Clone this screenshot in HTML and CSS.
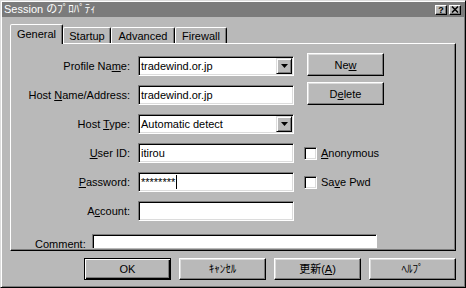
FILE: index.html
```html
<!DOCTYPE html>
<html>
<head>
<meta charset="utf-8">
<link rel="stylesheet" href="styles.css">
</head>
<body>
<div class="window">
  <div class="titlebar">
    <span class="title">Session のﾌﾟﾛﾊﾟﾃｨ</span>
    <div class="tb-btns">
      <span class="tbb tbb-help">?</span>
      <span class="tbb"><svg width="8" height="7" viewBox="0 0 8 7"><path d="M1 0.5 L7 6.5 M7 0.5 L1 6.5" stroke="#000" stroke-width="1.5" fill="none"/></svg></span>
    </div>
  </div>
  <div class="body">
    <div class="tabs">
      <div class="tab active tab-general">General</div>
      <div class="tab tab-startup">Startup</div>
      <div class="tab tab-advanced">Advanced</div>
      <div class="tab tab-firewall">Firewall</div>
    </div>
    <div class="panel">
      <div class="form">
        <label class="lbl">Profile Na<u>m</u>e:</label>
        <div class="field combo"><span class="val">tradewind.or.jp</span><span class="arrow"><svg width="7" height="4" viewBox="0 0 7 4"><path d="M0 0 H7 L3.5 4 Z" fill="#000"/></svg></span></div>
        <div class="right"><span class="btn side-btn">Ne<u>w</u></span></div>

        <label class="lbl">Host <u>N</u>ame/Address:</label>
        <div class="field"><span class="val">tradewind.or.jp</span></div>
        <div class="right"><span class="btn side-btn">D<u>e</u>lete</span></div>

        <label class="lbl">Host <u>T</u>ype:</label>
        <div class="field combo"><span class="val">Automatic detect</span><span class="arrow"><svg width="7" height="4" viewBox="0 0 7 4"><path d="M0 0 H7 L3.5 4 Z" fill="#000"/></svg></span></div>
        <div class="right"></div>

        <label class="lbl"><u>U</u>ser ID:</label>
        <div class="field"><span class="val">itirou</span></div>
        <div class="right check"><span class="box"></span><span><u>A</u>nonymous</span></div>

        <label class="lbl"><u>P</u>assword:</label>
        <div class="field"><span class="val pw">********</span><span class="caret"></span></div>
        <div class="right check"><span class="box"></span><span>Sa<u>v</u>e Pwd</span></div>

        <label class="lbl">A<u>c</u>count:</label>
        <div class="field"></div>
        <div class="right"></div>
      </div>
      <div class="comment-row">
        <label class="comment-lbl">Comment:</label>
        <div class="field comment-field"></div>
      </div>
    </div>
    <div class="buttons">
      <span class="btn big default">OK</span>
      <span class="btn big">ｷｬﾝｾﾙ</span>
      <span class="btn big">更新(<u>A</u>)</span>
      <span class="btn big">ﾍﾙﾌﾟ</span>
    </div>
  </div>
</div>
</body>
</html>
```
FILE: styles.css
```css
* { box-sizing: border-box; }
html, body { margin: 0; padding: 0; }
body {
  width: 466px;
  height: 288px;
  overflow: hidden;
  background: #b9b9b9;
  font-family: "Liberation Sans", "Noto Sans CJK JP", sans-serif;
  font-size: 11px;
  color: #000;
}
u { text-decoration: underline; text-underline-offset: 1px; }

.window {
  width: 466px;
  height: 288px;
  border: 1px solid;
  border-color: #dcdcdc #000 #000 #dcdcdc;
  box-shadow: inset 1px 1px #fff, inset -1px -1px #7b7b7b;
  padding: 1px;
  display: flex;
  flex-direction: column;
}

.titlebar {
  height: 15px;
  background: #7b7b7b;
  color: #fff;
  display: flex;
  align-items: center;
  padding: 0 3px 0 2px;
}
.title { line-height: 15px; white-space: nowrap; }
.tb-btns { margin-left: auto; display: flex; gap: 2px; }
.tbb {
  width: 12px;
  height: 10px;
  background: #b9b9b9;
  border: 1px solid;
  border-color: #fff #000 #000 #fff;
  box-shadow: inset -1px -1px #7b7b7b;
  display: flex;
  align-items: center;
  justify-content: center;
  color: #000;
}
.tbb-help { font-weight: bold; font-size: 9px; line-height: 8px; }

.body {
  flex: 1;
  padding: 7px 8px 0 8px;
  display: flex;
  flex-direction: column;
}

.tabs {
  display: flex;
  align-items: flex-end;
  height: 19px;
}
.tab {
  height: 16px;
  border: 1px solid;
  border-bottom: none;
  border-color: #fff #000 transparent #fff;
  box-shadow: inset -1px 0 #7b7b7b;
  border-radius: 2px 2px 0 0;
  padding-top: 1px;
  line-height: 14px;
  text-align: center;
  white-space: nowrap;
}
.tab.active {
  height: 20px;
  margin-bottom: -1px;
  padding-top: 2px;
  position: relative;
  z-index: 1;
  background: #b9b9b9;
}
.tab-general { width: 53px; }
.tab-startup { width: 48px; }
.tab-advanced { width: 64px; }
.tab-firewall { width: 52px; }

.panel {
  height: 208px;
  border: 1px solid;
  border-color: #fff #000 #000 #fff;
  box-shadow: inset -1px -1px #7b7b7b;
  overflow: hidden;
  padding-top: 12px;
}

.form {
  display: grid;
  grid-template-columns: 119px 156px 1fr;
  grid-auto-rows: 20px;
  column-gap: 8px;
  row-gap: 9px;
}
.lbl {
  text-align: right;
  align-self: center;
  white-space: nowrap;
  line-height: 14px;
}

.field {
  height: 20px;
  background: #fff;
  border: 1px solid;
  border-color: #7b7b7b #fff #fff #7b7b7b;
  box-shadow: inset 1px 1px #000, inset -1px -1px #dcdcdc;
  display: flex;
  align-items: center;
  padding: 0 2px 0 2px;
  white-space: nowrap;
  overflow: hidden;
}
.val { line-height: 14px; }
.caret { width: 1px; height: 14px; background: #000; margin-left: 1px; }
.combo { padding-right: 1px; }
.arrow {
  margin-left: auto;
  width: 16px;
  height: 16px;
  background: #b9b9b9;
  border: 1px solid;
  border-color: #dcdcdc #000 #000 #dcdcdc;
  box-shadow: inset 1px 1px #fff, inset -1px -1px #7b7b7b;
  display: flex;
  align-items: center;
  justify-content: center;
}

.right { display: flex; align-items: center; }
.check { margin-left: 2px; gap: 4px; }
.box {
  width: 13px;
  height: 13px;
  background: #fff;
  border: 1px solid;
  border-color: #7b7b7b #fff #fff #7b7b7b;
  box-shadow: inset 1px 1px #000, inset -1px -1px #dcdcdc;
}

.btn {
  display: flex;
  align-items: center;
  justify-content: center;
  border: 1px solid;
  border-color: #fff #000 #000 #fff;
  box-shadow: inset -1px -1px #7b7b7b, inset 1px 1px #dcdcdc;
  white-space: nowrap;
  line-height: 14px;
}
.side-btn {
  width: 77px;
  height: 23px;
  margin-left: 5px;
  margin-top: -3px;
}

.comment-row {
  display: flex;
  align-items: flex-start;
  margin-top: 13px;
  padding-left: 24px;
  gap: 6px;
}
.comment-lbl { line-height: 14px; padding-top: 3px; white-space: nowrap; }
.comment-field {
  width: 285px;
  height: 14px;
  flex: none;
  border-bottom: none;
  box-shadow: inset 1px 1px #000;
}

.buttons {
  display: flex;
  justify-content: flex-end;
  gap: 8px;
  margin-top: 7px;
}
.big { width: 87px; height: 22px; }
.default {
  border-color: #000;
  box-shadow: inset 1px 1px #fff, inset -1px -1px #000, inset -2px -2px #7b7b7b;
}
```
